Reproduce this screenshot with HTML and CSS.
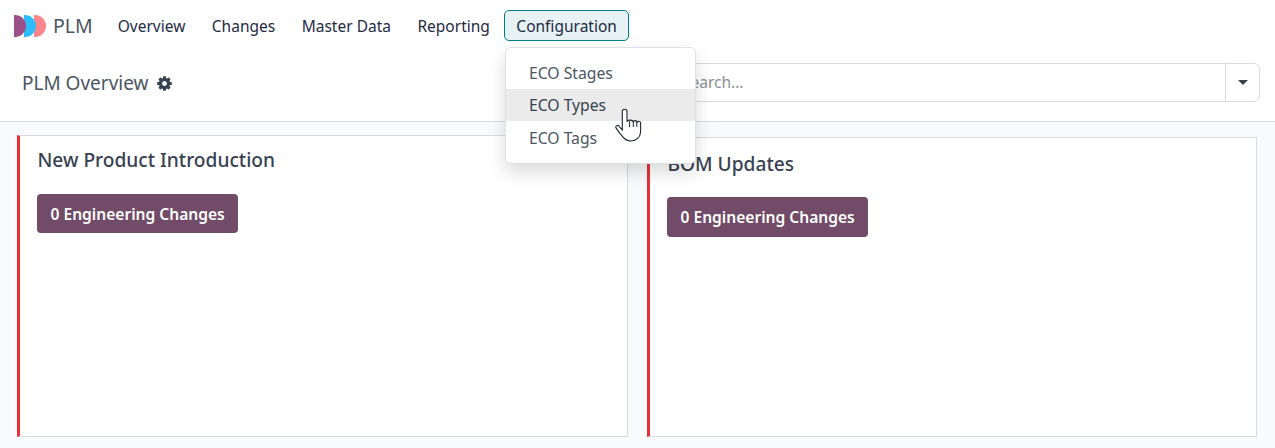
FILE: index.html
```html
<!DOCTYPE html>
<html lang="en">
<head>
<meta charset="utf-8">
<title>PLM Overview</title>
<link rel="stylesheet" href="styles.css">
</head>
<body>
<header class="navbar">
  <div class="brand">
    <svg class="logo" viewBox="0 0 32 22" width="32" height="22" aria-hidden="true">
      <path d="M20 0h1a11 11 0 0 1 0 22h-1z" fill="#fc868c"/>
      <path d="M10 0h1a11 11 0 0 1 0 22h-1z" fill="#2ebcfb"/>
      <path d="M20 1.2a11 11 0 0 1 0 19.6a11 11 0 0 0 0-19.6z" fill="#3a82a3"/>
      <path d="M0 0h1a11 11 0 0 1 0 22H0z" fill="#9a5189"/>
      <path d="M10 1.2a11 11 0 0 1 0 19.6a11 11 0 0 0 0-19.6z" fill="#2456a6"/>
    </svg>
    <span class="brand-name">PLM</span>
  </div>
  <nav class="menu">
    <a class="menu-item">Overview</a>
    <a class="menu-item">Changes</a>
    <a class="menu-item">Master Data</a>
    <a class="menu-item">Reporting</a>
    <a class="menu-item active">Configuration</a>
  </nav>
</header>
<section class="panel">
  <div class="crumb">
    <span class="crumb-title">PLM Overview</span>
    <svg class="gear" viewBox="0 0 1792 1792" width="17" height="17" aria-hidden="true"><path d="M1152 896q0-106-75-181t-181-75-181 75-75 181 75 181 181 75 181-75 75-181zm512-109v222q0 12-8 23t-20 13l-185 28q-19 54-39 91 35 50 107 138 10 12 10 25t-9 23q-27 37-99 108t-94 71q-12 0-26-9l-138-108q-44 23-91 38-16 136-29 186-7 28-36 28h-222q-14 0-24.5-8.5t-11.5-21.5l-28-184q-49-16-90-37l-141 107q-10 9-25 9-14 0-25-11-126-114-165-168-7-10-7-23 0-12 8-23 15-21 51-66.5t54-70.5q-27-50-41-99l-183-27q-13-2-21-12.5t-8-23.5v-222q0-12 8-23t19-13l186-28q14-46 39-92-40-57-107-138-10-12-10-24 0-10 9-23 26-36 98.5-107.5t94.5-71.5q13 0 26 10l138 107q44-23 91-38 16-136 29-186 7-28 36-28h222q14 0 24.5 8.5t11.5 21.5l28 184q49 16 90 37l142-107q9-9 24-9 13 0 25 10 129 119 165 170 7 8 7 22 0 12-8 23-15 21-51 66.5t-54 70.5q26 50 41 98l183 28q13 2 21 12.5t8 23.5z" fill="currentColor"/></svg>
  </div>
  <div class="search">
    <div class="search-input">Search...</div>
    <button class="search-toggle" type="button" aria-label="Toggle"><span class="caret"></span></button>
  </div>
</section>
<main class="content">
  <article class="card card-left">
    <h2 class="card-title">New Product Introduction</h2>
    <button class="card-btn" type="button">0 Engineering Changes</button>
  </article>
  <article class="card card-right">
    <h2 class="card-title">BOM Updates</h2>
    <button class="card-btn" type="button">0 Engineering Changes</button>
  </article>
</main>
<div class="dropdown">
  <a class="dropdown-item">ECO Stages</a>
  <a class="dropdown-item hover">ECO Types</a>
  <a class="dropdown-item">ECO Tags</a>
</div>
<svg class="cursor" viewBox="0 0 28 35" width="28" height="35" aria-hidden="true">
  <path d="M9.500 1.200c-1.400 0-2.200 1-2.200 2.300v18.700L3.900 18c-1.200-1.200-3-.6-3.100.9 0 .8.5 1.500 1.200 2.500 2 2.800 3.600 5 5.600 7.300 2.300 2.900 5 4.500 8.700 4.300 5-.3 8.800-3.800 9.200-8.300.2-3 .2-6.500.1-9.600-.1-2.200-2.900-2.500-3.500-.6 0-2-3.100-2.700-3.800-.6-.2-2.100-5.400-2.500-6.300-.5V3.500c0-1.300-.9-2.300-2.500-2.300z" fill="#fff" stroke="#1f2430" stroke-width="1.100" stroke-linejoin="round"/>
  <path d="M14.600 13.200v6M18.300 13v6M21.800 14v5" fill="none" stroke="#1f2430" stroke-width="1"/>
</svg>
</body>
</html>
```
FILE: styles.css
```css
* { box-sizing: border-box; }
html, body { margin: 0; height: 100%; }
body {
  position: relative;
  width: 1275px;
  height: 448px;
  overflow: hidden;
  display: flex;
  flex-direction: column;
  background: #f9fafb;
  color: #374151;
  font-family: "Noto Sans", "Liberation Sans", sans-serif;
  font-size: 15.7px;
}
.navbar {
  display: flex;
  align-items: center;
  height: 46px;
  padding: 5px 0 0 14px;
  background: #fff;
  flex: none;
}
.brand { display: flex; align-items: center; gap: 7px; }
.logo { display: block; }
.brand-name { font-size: 19.500px; color: #4b5563; }
.menu { display: flex; align-items: center; gap: 2.500px; margin-left: 13px; }
.menu-item {
  display: block;
  height: 31px;
  line-height: 31px;
  padding: 0 11px;
  border: 1px solid transparent;
  border-radius: 5px;
  font-size: 15.500px;
  color: #1f2a44;
}
.menu-item.active { background: #e6f2f3; border-color: #017e84; }
.panel {
  display: flex;
  align-items: center;
  justify-content: space-between;
  height: 76px;
  padding: 0 15px 3px 22px;
  background: #fff;
  border-bottom: 1px solid #d8dadd;
  flex: none;
}
.crumb { display: flex; align-items: center; gap: 7px; color: #4b5563; margin-top: 2px; }
.crumb-title { font-size: 19px; }
.gear { color: #374151; display: block; }
.search { display: flex; width: 622px; height: 39px; }
.search-input {
  flex: 1;
  padding-left: 43px;
  line-height: 37px;
  color: #8b8f96;
  font-size: 15.500px;
  border: 1px solid #d8dadd;
  border-right: 0;
  border-radius: 4px 0 0 4px;
  background: #fff;
}
.search-toggle {
  width: 35px;
  padding: 0;
  display: flex;
  align-items: center;
  justify-content: center;
  background: #fff;
  border: 1px solid #d8dadd;
  border-radius: 0 6px 6px 0;
}
.caret {
  width: 0;
  height: 0;
  border-left: 5px solid transparent;
  border-right: 5px solid transparent;
  border-top: 5px solid #374151;
}
.content {
  flex: 1;
  display: grid;
  grid-template-columns: 611px 610px;
  column-gap: 19px;
  align-items: end;
  padding: 0 18px 11px 17px;
}
.card {
  background: #fff;
  border: 1px solid #d8dadd;
  border-left: 3px solid #e9303a;
}
.card-left { height: 302px; padding: 12px 0 0 17px; }
.card-right { height: 300px; padding: 14px 0 0 17px; }
.card-title {
  margin: 0 0 0 .500px;
  font-size: 19.150px;
  line-height: 25px;
  font-weight: 500;
  color: #374151;
}
.card-btn {
  display: block;
  padding: 0 13.500px;
  background: #714b67;
  color: #fff;
  border: 0;
  border-radius: 4px;
  font: 600 15.580px "Noto Sans", "Liberation Sans", sans-serif;
}
.card-left .card-btn { height: 39px; margin-top: 21px; }
.card-right .card-btn { height: 40px; margin-top: 20px; }
.dropdown {
  position: absolute;
  left: 504.500px;
  top: 46.500px;
  width: 191px;
  height: 117px;
  padding: 9px 0;
  background: #fff;
  border: 1px solid #dfe1e4;
  border-radius: 6px;
  box-shadow: 0 8px 18px rgba(0, 0, 0, .15);
}
.dropdown-item {
  display: block;
  height: 32.400px;
  line-height: 32.400px;
  padding-left: 23.500px;
  color: #4b5563;
}
.dropdown-item.hover { background: #ebebeb; color: #374151; }
.dropdown-item:last-child { padding-top: .500px; }
.cursor { position: absolute; left: 615px; top: 108px; }
```
